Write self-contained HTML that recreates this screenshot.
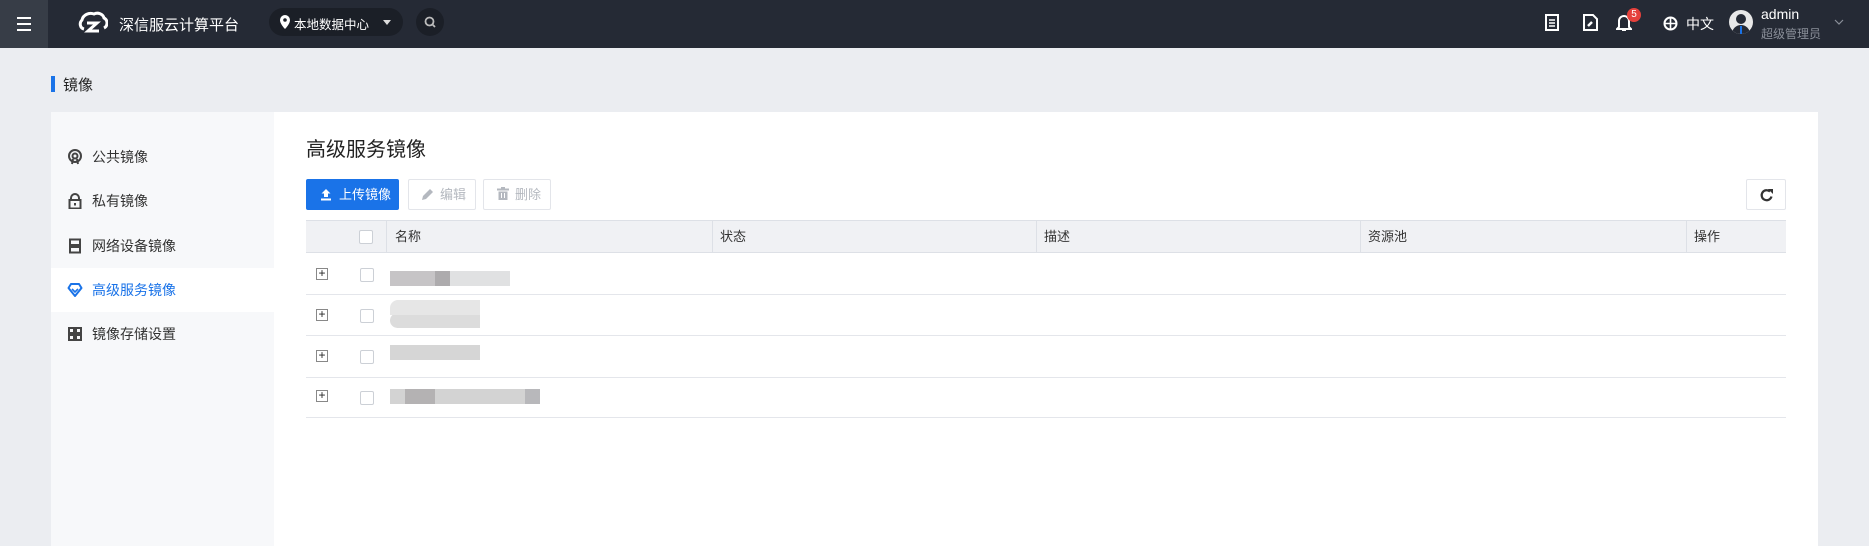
<!DOCTYPE html>
<html><head><meta charset="utf-8"><style>
*{box-sizing:border-box;margin:0;padding:0}
body{width:1869px;height:546px;overflow:hidden;background:#ebedf1;font-family:"Liberation Sans","Noto Sans CJK SC",sans-serif;font-size:14px;color:#333;position:relative}
.abs{position:absolute}
.hdr{left:0;top:0;width:1869px;height:48px;background:#252a35}
.ham{left:0;top:0;width:48px;height:48px;background:#373d47}
.ham i{position:absolute;left:17px;width:14px;height:2px;background:#fff}
.wt{color:#fff}
.side{left:51px;top:112px;width:223px;height:434px;background:#f7f8fa}
.main{left:274px;top:112px;width:1544px;height:434px;background:#fff}
.item{position:absolute;left:0;width:223px;height:44px;line-height:44px;padding-left:41px;font-size:14px;color:#333}
.item svg{position:absolute;left:16px;top:14px}
.btn{position:absolute;top:179px;height:31px;border:1px solid #e3e5ea;border-radius:2px;font-size:13px;line-height:29px;color:#b4b8bf;background:#fff}
.th{position:absolute;top:220px;height:34px;line-height:33px;font-size:13px;color:#333}
.vd{position:absolute;top:220px;width:1px;height:33px;background:#dde0e6}
.hl{position:absolute;left:306px;width:1480px;height:1px;background:#e4e6eb}
.cb{position:absolute;width:14px;height:14px;border:1px solid #ccd0d6;border-radius:2px;background:#fff}
.pl{position:absolute;left:316px;width:12px;height:12px;border:1px solid #888;background:#fff;font-size:12px;line-height:9px;text-align:center;color:#222}
.blk{position:absolute;background:#d6d6d8}
</style></head><body>
<div class="abs hdr"></div>
<div class="abs ham"><i style="top:17px"></i><i style="top:23px"></i><i style="top:29px"></i></div>
<svg class="abs" style="left:78px;top:11px" width="30" height="26" viewBox="0 0 30 26"><path d="M6 18c-4-1-5-6-2-9 1-5 7-8 12-6 4-2 9 0 10 4 4 2 4 8 0 10" fill="none" stroke="#fff" stroke-width="3"/><path d="M9 12h10l-9 8h11" fill="none" stroke="#fff" stroke-width="3"/></svg>
<div class="abs wt" style="left:119px;top:14px;font-size:15px">深信服云计算平台</div>
<div class="abs" style="left:269px;top:8px;width:134px;height:28px;border-radius:14px;background:#1b1f27"></div>
<svg class="abs" style="left:280px;top:15px" width="10" height="14" viewBox="0 0 10 14"><path d="M5 0a5 5 0 0 1 5 5c0 4-5 9-5 9S0 9 0 5a5 5 0 0 1 5-5z" fill="#fff"/><circle cx="5" cy="5" r="1.8" fill="#1b1f27"/></svg>
<div class="abs wt" style="left:294px;top:14px;font-size:12.5px">本地数据中心</div>
<div class="abs" style="left:383px;top:20px;border:4px solid transparent;border-top:5px solid #ddd"></div>
<div class="abs" style="left:416px;top:8px;width:28px;height:28px;border-radius:50%;background:#1b1f27"></div>
<svg class="abs" style="left:424px;top:16px" width="12" height="12" viewBox="0 0 12 12"><circle cx="5.5" cy="5.5" r="4" fill="none" stroke="#bbb" stroke-width="1.8"/><path d="M8 8l3 3" stroke="#bbb" stroke-width="1.8"/></svg>
<svg class="abs" style="left:1545px;top:14px" width="14" height="17" viewBox="0 0 14 17"><rect x="1" y="1" width="12" height="15" fill="none" stroke="#fff" stroke-width="2"/><path d="M4 6h6M4 9h6M4 12h6" stroke="#fff" stroke-width="1.5"/></svg>
<svg class="abs" style="left:1583px;top:14px" width="15" height="17" viewBox="0 0 15 17"><path d="M1 1h9l4 4v11H1z" fill="none" stroke="#fff" stroke-width="2"/><path d="M5 12l4-4" stroke="#fff" stroke-width="2.5"/></svg>
<svg class="abs" style="left:1616px;top:13px" width="16" height="19" viewBox="0 0 16 19"><path d="M3 14V8a5 5 0 0 1 10 0v6l2 2H1z" fill="none" stroke="#fff" stroke-width="2"/><path d="M6 17h4" stroke="#fff" stroke-width="2"/></svg>
<div class="abs" style="left:1627px;top:8px;width:14px;height:14px;border-radius:50%;background:#e5413c;color:#fff;font-size:10px;line-height:14px;text-align:center">5</div>
<svg class="abs" style="left:1663px;top:16px" width="15" height="15" viewBox="0 0 15 15"><circle cx="7.5" cy="7.5" r="6" fill="none" stroke="#fff" stroke-width="2"/><path d="M1.5 7.5h12M7.5 1.5v12" stroke="#fff" stroke-width="1.6"/></svg>
<div class="abs wt" style="left:1686px;top:14px;font-size:14px">中文</div>
<div class="abs" style="left:1729px;top:10px;width:24px;height:24px;border-radius:50%;background:#e8e8e8;overflow:hidden"><div style="position:absolute;left:7px;top:4px;width:10px;height:10px;border-radius:50%;background:#252a35"></div><div style="position:absolute;left:3px;top:15px;width:18px;height:14px;border-radius:9px 9px 0 0;background:#252a35"></div><div style="position:absolute;left:11px;top:16px;width:2px;height:8px;background:#1a73e8"></div></div>
<div class="abs wt" style="left:1761px;top:6px;font-size:14px">admin</div>
<div class="abs" style="left:1761px;top:25px;font-size:12px;color:#8a8f99">超级管理员</div>
<svg class="abs" style="left:1834px;top:19px" width="10" height="6" viewBox="0 0 10 6"><path d="M1 1l4 4 4-4" fill="none" stroke="#8a8f99" stroke-width="1.2"/></svg>

<div class="abs" style="left:51px;top:76px;width:4px;height:16px;background:#1a73e8"></div>
<div class="abs" style="left:63px;top:74px;font-size:15px;color:#222">镜像</div>

<div class="abs side">
<div class="item" style="top:23px"><svg width="16" height="16" viewBox="0 0 16 16"><circle cx="8" cy="7" r="6" fill="none" stroke="#444" stroke-width="2"/><circle cx="8" cy="7" r="2.5" fill="none" stroke="#444" stroke-width="2"/><path d="M6 10l-1 5M10 10l1 5" stroke="#444" stroke-width="2"/></svg>公共镜像</div>
<div class="item" style="top:67px"><svg width="16" height="16" viewBox="0 0 16 16"><path d="M4 7V5a4 4 0 0 1 8 0v2" fill="none" stroke="#444" stroke-width="2"/><rect x="2.5" y="7" width="11" height="8.5" fill="none" stroke="#444" stroke-width="2"/><rect x="7" y="10" width="2" height="2.5" fill="#444"/></svg>私有镜像</div>
<div class="item" style="top:112px"><svg width="16" height="16" viewBox="0 0 16 16"><rect x="3" y="1.5" width="10" height="5.5" fill="none" stroke="#444" stroke-width="2"/><rect x="3" y="9" width="10" height="5.5" fill="none" stroke="#444" stroke-width="2"/></svg>网络设备镜像</div>
<div class="item" style="top:156px;background:#fff;color:#1a73e8"><svg width="16" height="16" viewBox="0 0 16 16"><path d="M1.5 6L4 2h8l2.5 4L8 14z" fill="none" stroke="#1a73e8" stroke-width="2" stroke-linejoin="round"/><path d="M5 7l3 3 3-3" fill="none" stroke="#1a73e8" stroke-width="1.6"/></svg>高级服务镜像</div>
<div class="item" style="top:200px"><svg width="16" height="16" viewBox="0 0 16 16"><g fill="none" stroke="#444" stroke-width="2"><rect x="2" y="2" width="5" height="5"/><rect x="9" y="2" width="5" height="5"/><rect x="2" y="9" width="5" height="5"/><rect x="9" y="9" width="5" height="5"/></g></svg>镜像存储设置</div>
</div>
<div class="abs main"></div>
<div class="abs" style="left:306px;top:133px;font-size:20px;color:#222">高级服务镜像</div>
<div class="btn" style="left:306px;width:93px;background:#1a73e8;border-color:#1a73e8;color:#fff;padding-left:32px">上传镜像
<svg style="position:absolute;left:13px;top:8px" width="12" height="13" viewBox="0 0 12 13"><path d="M6 1L1.5 5.5H4V9h4V5.5h2.5z" fill="#fff"/><rect x="1" y="10.5" width="10" height="2" fill="#fff"/></svg></div>
<div class="btn" style="left:408px;width:68px;padding-left:31px">编辑
<svg style="position:absolute;left:12px;top:8px" width="13" height="13" viewBox="0 0 13 13"><path d="M1 12l1-4 7-7 3 3-7 7z" fill="#b4b8bf"/></svg></div>
<div class="btn" style="left:483px;width:68px;padding-left:31px">删除
<svg style="position:absolute;left:13px;top:7px" width="12" height="13" viewBox="0 0 12 13"><rect x="0" y="1.5" width="12" height="2" fill="#b4b8bf"/><rect x="4" y="0" width="4" height="2" fill="#b4b8bf"/><path d="M1.5 4.5h9V13h-9z" fill="#b4b8bf"/><path d="M4.5 6v5M7.5 6v5" stroke="#fff" stroke-width="1"/></svg></div>
<div class="btn" style="left:1746px;width:40px"><svg style="position:absolute;left:13px;top:8px" width="14" height="14" viewBox="0 0 14 14"><path d="M11.5 8.5A5 5 0 1 1 10 3.5" fill="none" stroke="#333" stroke-width="2.2"/><path d="M8 1h5v5z" fill="#333"/></svg></div>

<div class="abs" style="left:306px;top:220px;width:1480px;height:33px;background:#f0f1f4;border-top:1px solid #dde0e6;border-bottom:1px solid #dde0e6"></div>
<div class="cb" style="left:359px;top:230px"></div>
<div class="vd" style="left:386px"></div><div class="vd" style="left:712px"></div><div class="vd" style="left:1036px"></div><div class="vd" style="left:1360px"></div><div class="vd" style="left:1686px"></div>
<div class="th" style="left:395px">名称</div><div class="th" style="left:720px">状态</div><div class="th" style="left:1044px">描述</div><div class="th" style="left:1368px">资源池</div><div class="th" style="left:1694px">操作</div>

<div class="hl" style="top:294px"></div><div class="hl" style="top:335px"></div><div class="hl" style="top:377px"></div><div class="hl" style="top:417px"></div>
<div class="pl" style="top:268px">+</div><div class="pl" style="top:309px">+</div><div class="pl" style="top:350px">+</div><div class="pl" style="top:390px">+</div>
<div class="cb" style="left:360px;top:268px"></div><div class="cb" style="left:360px;top:309px"></div><div class="cb" style="left:360px;top:350px"></div><div class="cb" style="left:360px;top:391px"></div>

<div class="blk" style="left:390px;top:271px;width:60px;height:15px;background:#c6c4c6"></div>
<div class="blk" style="left:435px;top:271px;width:15px;height:15px;background:#adabad"></div>
<div class="blk" style="left:450px;top:271px;width:60px;height:15px;background:#e0e1e2"></div>
<div class="blk" style="left:390px;top:313px;width:90px;height:15px;background:#dcdcdc;border-radius:8px 0 0 8px"></div>
<div class="blk" style="left:390px;top:300px;width:90px;height:15px;background:#e6e6e6;border-radius:8px 0 0 0"></div>
<div class="blk" style="left:390px;top:345px;width:90px;height:15px;background:#d6d6d6"></div>
<div class="blk" style="left:390px;top:389px;width:150px;height:15px;background:#d3d3d3"></div>
<div class="blk" style="left:405px;top:389px;width:30px;height:15px;background:#b4b2b3"></div>
<div class="blk" style="left:525px;top:389px;width:15px;height:15px;background:#b8b8bb"></div>
</body></html>
